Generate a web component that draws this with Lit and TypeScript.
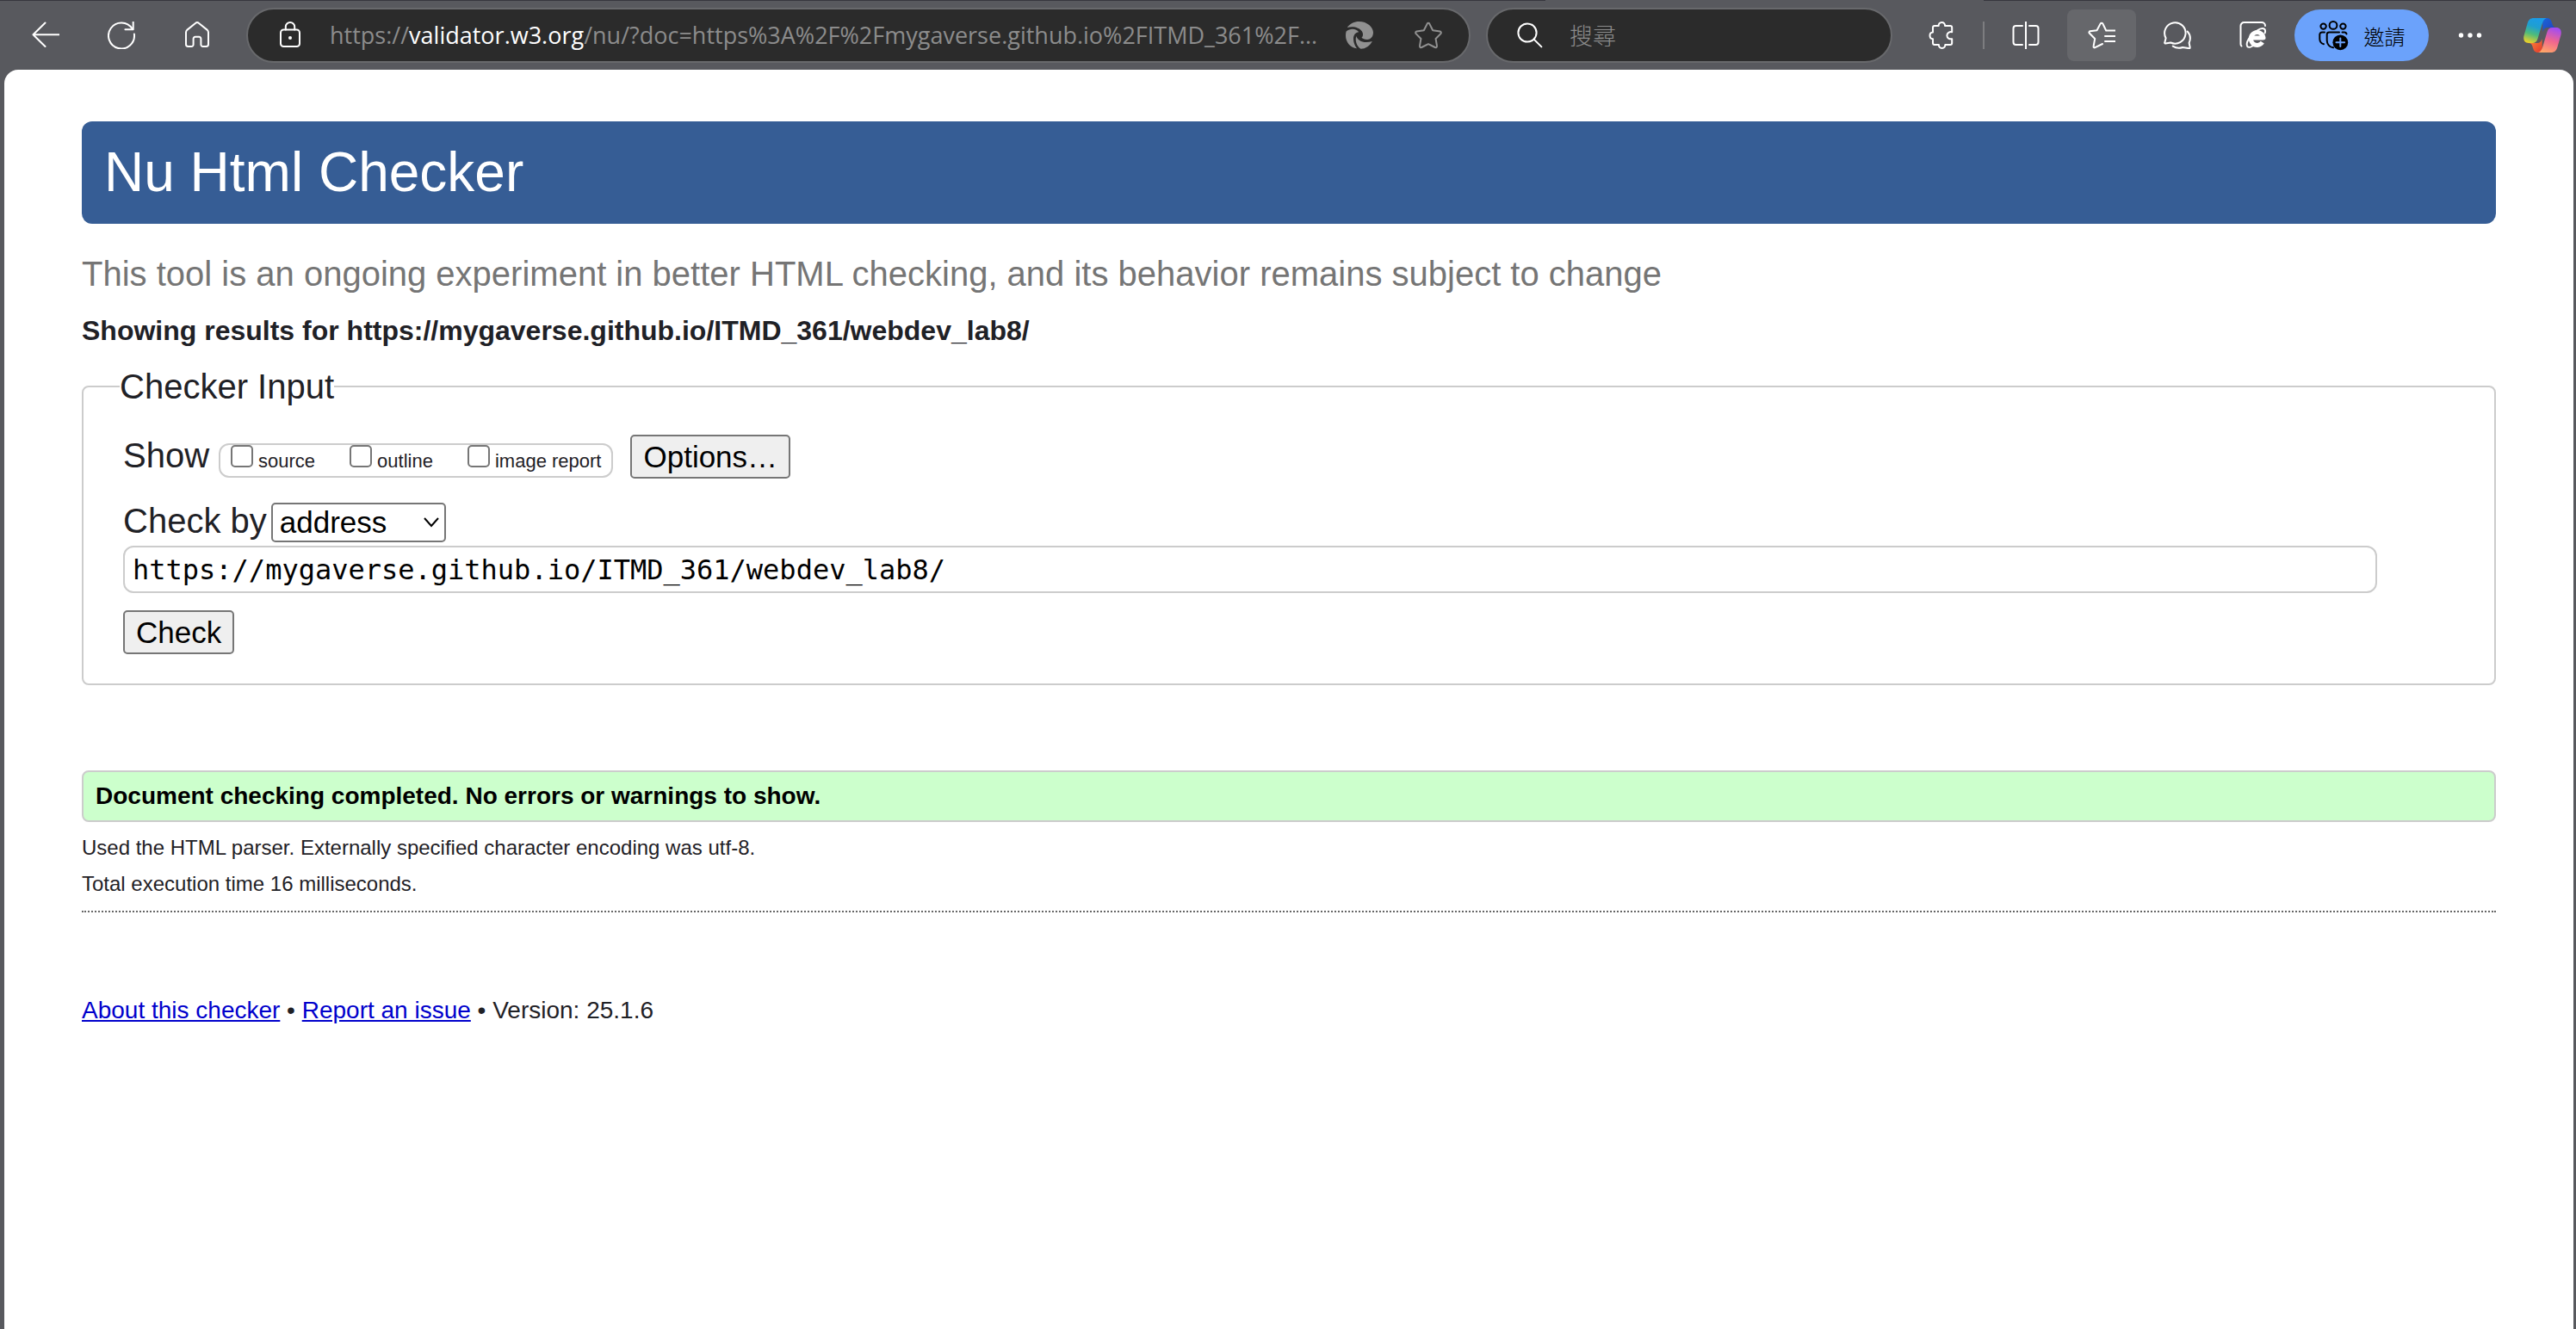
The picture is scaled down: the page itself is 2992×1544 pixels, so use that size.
import { LitElement, html, css, svg } from "lit";
import { customElement, state } from "lit/decorators.js";

const DOC_URL = "https://mygaverse.github.io/ITMD_361/webdev_lab8/";

const icons = {
  back: svg`<path d="M15.5 1.5 1.5 15.3 15.5 29M1.5 15.3H32" />`,
  reload: svg`<path d="M30.9 14.6A15 15 0 1 1 28.6 8.3" /><path d="M29.7 0.6V9.2H20.4" />`,
  home: svg`<path d="M3 12.6a4 4 0 0 1 1.2-2.7L14.3 1.8a2.4 2.4 0 0 1 3.4 0L27.8 9.9A4 4 0 0 1 29 12.6V26.6a2.4 2.4 0 0 1-2.4 2.4H22.6a2.2 2.2 0 0 1-2.2-2.2V20a2.2 2.2 0 0 0-2.2-2.2H13.8A2.2 2.2 0 0 0 11.6 20v6.8A2.2 2.2 0 0 1 9.4 29H5.4A2.4 2.4 0 0 1 3 26.6Z" />`,
  lock: svg`<rect x="5" y="9.5" width="22" height="19.6" rx="3.4" /><path d="M10.8 9.5V6.2a5.2 5.2 0 0 1 10.4 0V9.5" /><circle class="solid" cx="16" cy="19" r="2" />`,
  swirl: svg`<path class="solid" d="M1.8 7C5 2.2 10 0 15.5 0 25 0 32 6.500 32 12.800 32 18 28.500 21 25 21 22 21 19.500 20 18.500 18.800 20.600 17 20.400 13.500 18.800 11.200 16 7 8.500 4.800 1.800 7Z" /><path class="solid" d="M0.600 11.500C5.500 7.200 12.500 8.200 15.200 12.200 11.500 12.600 9 15.500 9 20 9 24.500 10.500 28 13 31.200 5.500 30.500 0 24 0 16.500 0 14.500 0.200 12.800 0.600 11.500Z" /><path class="solid" d="M12.300 17C14 22.500 21 26 30.800 23 28.500 28 23 31.800 17.500 31.800 12.500 28.500 10.700 22 12.300 17Z" />`,
  star: svg`<path d="M14.700 2.600a1.500 1.500 0 0 1 2.600 0L21.200 10.300 29.600 11.600a1.500 1.500 0 0 1 0.800 2.500L24.600 20 26 28.400a1.500 1.500 0 0 1-2.200 1.600L16 26.200 8.200 30A1.500 1.500 0 0 1 6 28.400L7.400 20 1.600 14.100a1.500 1.500 0 0 1 0.800-2.500L10.800 10.300Z" />`,
  search: svg`<circle cx="13" cy="13" r="10.600" /><path d="M20.600 20.600 29.400 29.400" />`,
  puzzle: svg`<path d="M8 5H12.700C12.400 2.800 14 1 16.300 1s4 1.800 3.700 4H26.200a2 2 0 0 1 2 2v5.200C25.500 11.500 22.400 13.200 22.400 16.200s3 4.600 5.800 4V25a2 2 0 0 1-2 2H20.300C20.400 29.400 19 31 16.600 31S12.800 29.400 12.900 27H8a2 2 0 0 1-2-2V20.300C3.900 20.200 2.500 18.600 2.500 16.300S3.900 12.600 6 12.500V7a2 2 0 0 1 2-2Z" />`,
  split: svg`<path d="M12 5H4.500A3 3 0 0 0 1.500 8V24a3 3 0 0 0 3 3H12M20 5h7.500a3 3 0 0 1 3 3V24a3 3 0 0 1-3 3H20M16 0V32" />`,
  favorites: svg`<path d="M17 26 8.500 30.200a1.300 1.300 0 0 1-1.900-1.400L8.200 20 1.800 13.500a1.300 1.300 0 0 1 0.700-2.200L10.500 10.300 14.700 2.400a1.500 1.500 0 0 1 2.600 0L21.200 10.500H32M20 17H32M20 23H32" />`,
  chat: svg`<path d="M2.300 25.400a0.800 0.800 0 0 1-1-1L2.600 19.200A12.200 12.200 0 1 1 8.200 24.500Z" /><path d="M10.800 28.600a12.500 12.500 0 0 0 11.300 1.400L29.800 31.200a0.800 0.800 0 0 0 0.900-1L29.600 24.800A12.300 12.300 0 0 0 27.600 11.500" />`,
  explorer: svg`<path d="M2.500 28.500A3 3 0 0 1 1.500 26V5A4 4 0 0 1 5.500 1H26a4 4 0 0 1 4 4" /><path class="blade" d="M26.800 24.200A7.400 7.400 0 1 1 28 18.900H15" /><path d="M29.600 13.500C31.800 7.500 26.500 6.500 20.500 10.500 12 15.800 7 25.200 9.200 28.800 10.500 30.600 14 29.600 16.500 27.800" />`,
  invite: svg`<g class="dark"><circle cx="5.600" cy="6.600" r="3.200" /><circle cx="17" cy="5.400" r="4.400" /><circle cx="28.400" cy="6.600" r="3.200" /><path d="M7 13.500H4A2.600 2.600 0 0 0 1.300 16V21.500A6.500 6.500 0 0 0 6 27.300M27.500 13.500H30A2.600 2.600 0 0 1 32.500 15.500M24 13.500H12.300A2.600 2.600 0 0 0 9.700 16V23A8.300 8.300 0 0 0 17 31.300" /></g><circle cx="25.300" cy="25.300" r="8.900" fill="#000" stroke="none" /><path d="M25.300 20.500V30.100M20.500 25.300H30.100" stroke="#6ba2fb" />`,
  more: svg`<g class="solid"><circle cx="5.500" cy="16" r="2.700" /><circle cx="16" cy="16" r="2.700" /><circle cx="26.500" cy="16" r="2.700" /></g>`,
};

const icon = (shape: unknown, size = 32) => html`
  <svg class="icon" width=${size} height=${size} viewBox="0 0 ${size} ${size}" aria-hidden="true">${shape}</svg>
`;

@customElement("browser-toolbar")
class BrowserToolbar extends LitElement {
  static styles = css`
    :host {
      display: flex;
      flex-direction: column;
      font-family: "Open Sans", "Noto Sans CJK TC", sans-serif;
    }
    .edge {
      display: flex;
      justify-content: space-between;
      height: 1px;
    }
    .edge-left, .edge-right { background: #37373e; }
    .edge-left { width: 60%; }
    .edge-right { width: 23%; }
    .bar {
      display: flex;
      align-items: center;
      height: 80px;
      padding: 0 17px 0 21px;
    }
    button {
      display: flex;
      align-items: center;
      justify-content: center;
      border: 0;
      padding: 0;
      background: none;
      color: #fff;
      font-family: inherit;
    }
    .icon {
      display: block;
      flex: none;
      fill: none;
      stroke: currentColor;
      stroke-width: 2;
      stroke-linecap: round;
      stroke-linejoin: round;
    }
    .solid { fill: currentColor; stroke: none; }
    .blade { stroke-width: 5; stroke-linecap: butt; }
    .dark { stroke: #000; }
    .nav { display: flex; gap: 24px; margin-right: 25px; }
    .nav button { width: 64px; height: 60px; }
    .field {
      box-sizing: border-box;
      display: flex;
      align-items: center;
      height: 64px;
      border: 2px solid #68696c;
      border-radius: 32px;
      background: #2b2b2b;
    }
    .address {
      flex: 1;
      min-width: 0;
      gap: 24px;
      margin-right: 18px;
      padding: 0 31px 0 33px;
    }
    .site { display: flex; flex: 1; align-items: center; gap: 30px; min-width: 0; }
    .tools { display: flex; gap: 48px; }
    .url {
      flex: 1;
      overflow: hidden;
      color: #8c8c8c;
      font-size: 27px;
      line-height: 38px;
      white-space: nowrap;
    }
    .host { color: #fff; }
    .muted { color: #919191; }
    .search {
      flex: 0 1 472px;
      gap: 30px;
      margin-right: 17px;
      padding: 0 33px;
      color: #fff;
    }
    .search input {
      flex: 1;
      min-width: 0;
      border: 0;
      padding: 0;
      outline: 0;
      background: none;
      color: #fff;
      font-family: "Noto Sans CJK TC", sans-serif;
      font-size: 27px;
      font-weight: 300;
      line-height: 38px;
    }
    .search input::placeholder { color: #8c8c8c; opacity: 1; }
    .actions { display: flex; align-items: center; gap: 8px; }
    .actions button { width: 80px; height: 60px; border-radius: 8px; }
    .actions .active { background: #66676b; }
    .divider { width: 2px; height: 32px; background: #7d7d80; }
    .actions .invite {
      gap: 18px;
      width: 156px;
      border-radius: 30px;
      background: #6ba2fb;
      color: #000;
      font-size: 24px;
      font-weight: 300;
      font-family: "Noto Sans CJK TC", sans-serif;
    }
    .actions .copilot { width: 44px; margin-left: 14px; }
  `;

  render() {
    return html`
      <div class="edge"><div class="edge-left"></div><div class="edge-right"></div></div>
      <div class="bar">
        <nav class="nav" aria-label="Navigation">
          <button aria-label="Back">${icon(icons.back)}</button>
          <button aria-label="Refresh">${icon(icons.reload)}</button>
          <button aria-label="Home">${icon(icons.home)}</button>
        </nav>
        <div class="field address">
          <div class="site">
            <button aria-label="Site information">${icon(icons.lock)}</button>
            <div class="url" role="textbox" tabindex="0" aria-label="Address">https://<span class="host">validator.w3.org</span>/nu/?doc=https%3A%2F%2Fmygaverse.github.io%2FITMD_361%2F...</div>
          </div>
          <div class="tools">
            <button class="muted" aria-label="Page tools">${icon(icons.swirl)}</button>
            <button class="muted" aria-label="Add to favorites">${icon(icons.star)}</button>
          </div>
        </div>
        <label class="field search">
          ${icon(icons.search)}
          <input type="search" placeholder="搜尋" aria-label="搜尋" />
        </label>
        <div class="actions">
          <button aria-label="Extensions">${icon(icons.puzzle)}</button>
          <div class="divider"></div>
          <button aria-label="Split screen">${icon(icons.split)}</button>
          <button class="active" aria-label="Favorites">${icon(icons.favorites)}</button>
          <button aria-label="Chat">${icon(icons.chat)}</button>
          <button aria-label="Internet Explorer mode">${icon(icons.explorer)}</button>
          <button class="invite">${icon(icons.invite, 35)}<span>邀請</span></button>
          <button aria-label="More">${icon(icons.more)}</button>
          <button class="copilot" aria-label="Copilot">
            <svg width="44" height="40" viewBox="0 0 44 40" aria-hidden="true">
              <defs>
                <linearGradient id="cool" x1="0.6" y1="0" x2="0.3" y2="1">
                  <stop offset="0" stop-color="#1b9be8" />
                  <stop offset="0.35" stop-color="#1f9fd0" />
                  <stop offset="0.65" stop-color="#4dbb7c" />
                  <stop offset="1" stop-color="#e8d02c" />
                </linearGradient>
                <linearGradient id="warm" x1="0.6" y1="0" x2="0.3" y2="1">
                  <stop offset="0" stop-color="#a44df0" />
                  <stop offset="0.5" stop-color="#f0668f" />
                  <stop offset="1" stop-color="#ffa668" />
                </linearGradient>
                <linearGradient id="fold" x1="0" y1="0" x2="1" y2="1">
                  <stop offset="0" stop-color="#1a64d8" />
                  <stop offset="1" stop-color="#2340b8" />
                </linearGradient>
                <linearGradient id="ember" x1="0" y1="0" x2="1" y2="1">
                  <stop offset="0" stop-color="#ff8a3c" />
                  <stop offset="1" stop-color="#e0382c" />
                </linearGradient>
              </defs>
              <path fill="url(#fold)" d="M22 0H27C31 0 32 2 33.500 7 34.300 9.800 35.500 11 38 11H28C25 11 23.500 12.500 22.500 16Z" />
              <path fill="url(#ember)" d="M22 40H17C13 40 12 38 10.500 33 9.700 30.200 8.500 29 6 29H16C19 29 20.500 27.500 21.500 24Z" />
              <path fill="url(#cool)" d="M12 0H27C23.500 1 22.500 4 21 9L16.500 24C15.500 27.500 13.500 29 10.500 29H6C1 29-0.500 25 0.500 20.500L4.500 6.500C5.800 2 8 0 12 0Z" />
              <path fill="url(#warm)" d="M32 40H17C20.500 39 21.500 36 23 31L27.500 16C28.500 12.500 30.500 11 33.500 11H38C43 11 44.500 15 43.500 19.500L39.500 33.500C38.200 38 36 40 32 40Z" />
            </svg>
          </button>
        </div>
      </div>
    `;
  }
}

@customElement("checker-form")
class CheckerForm extends LitElement {
  static styles = css`
    :host {
      display: block;
      color: #1f2126;
      font-size: 40px;
      line-height: 46px;
    }
    .frame {
      min-width: 0;
      margin: 0;
      border: 2px solid #ccc;
      border-radius: 8px;
      padding: 0 42px 34px;
    }
    legend { padding: 0; }
    .rows { display: flex; flex-direction: column; align-items: flex-start; padding: 33px 4px 0; }
    .row { display: flex; align-items: baseline; }
    .shown {
      display: flex;
      align-items: baseline;
      gap: 40px;
      margin: 0 20px 0 11px;
      border: 2px solid #ccc;
      border-radius: 12px;
      padding: 0 12px;
      font-size: 22px;
      line-height: 35px;
    }
    .option { display: flex; align-items: baseline; gap: 6px; }
    .box {
      appearance: none;
      box-sizing: border-box;
      width: 26px;
      height: 26px;
      margin: 0;
      border: 2px solid #767676;
      border-radius: 5px;
      background: #fff;
    }
    .box:checked { background: #0075ff; }
    .push {
      border: 2px solid #767676;
      border-radius: 5px;
      padding: 0 13px;
      background: #efefef;
      color: #000;
      font-family: inherit;
      font-size: 35px;
      line-height: 47px;
    }
    .by { margin-top: 26px; gap: 5px; }
    .picker { display: grid; align-items: center; }
    .picker select {
      grid-area: 1 / 1;
      appearance: none;
      border: 2px solid #767676;
      border-radius: 5px;
      width: 203px;
      height: 46px;
      padding: 0 8px;
      background: #fff;
      color: #000;
      font-family: inherit;
      font-size: 35px;
      line-height: 42px;
    }
    .chevron {
      grid-area: 1 / 1;
      justify-self: end;
      margin-right: 7px;
      fill: none;
      stroke: #000;
      stroke-width: 2;
      pointer-events: none;
    }
    .doc {
      box-sizing: border-box;
      align-self: stretch;
      height: 55px;
      margin: 4px 90px 20px 0;
      border: 2px solid #ccc;
      border-radius: 12px;
      padding: 0 9px;
      color: #000;
      font-family: "DejaVu Sans Mono", monospace;
      font-size: 32px;
    }
  `;

  @state() private address = DOC_URL;

  render() {
    return html`
      <form @submit=${(e: Event) => e.preventDefault()}>
        <fieldset class="frame">
          <legend>Checker Input</legend>
          <div class="rows">
            <div class="row">
              <span>Show</span>
              <div class="shown">
                ${["source", "outline", "image report"].map(
                  (name) => html`<label class="option"><input class="box" type="checkbox" /><span>${name}</span></label>`
                )}
              </div>
              <button class="push" type="button">Options…</button>
            </div>
            <div class="row by">
              <label for="method">Check by</label>
              <div class="picker">
                <select id="method">
                  <option>address</option>
                  <option>file upload</option>
                  <option>text input</option>
                </select>
                <svg class="chevron" width="20" height="14" viewBox="0 0 20 14" aria-hidden="true"><path d="M2 2 10 11 18 2" /></svg>
              </div>
            </div>
            <input
              class="doc"
              type="url"
              aria-label="Document address"
              .value=${this.address}
              @input=${(e: Event) => (this.address = (e.target as HTMLInputElement).value)}
            />
            <button class="push" type="submit">Check</button>
          </div>
        </fieldset>
      </form>
    `;
  }
}

@customElement("app-root")
class AppRoot extends LitElement {
  static styles = css`
    :host {
      display: flex;
      flex-direction: column;
      min-height: 100vh;
      background: #58595e;
      font-family: "Liberation Sans", Arial, sans-serif;
    }
    .page {
      flex: 1;
      margin: 0 3px 0 5px;
      border-radius: 16px 16px 0 0;
      padding: 60px 90px;
      background: #fff;
      color: #1f2126;
    }
    h1, h2, p { margin: 0; }
    .title {
      border-radius: 12px;
      padding: 0 26px;
      background: #365d95;
      color: #fff;
      font-size: 64px;
      font-weight: 400;
      line-height: 119px;
    }
    .tagline { margin-top: 35px; color: #757575; font-size: 40px; line-height: 46px; }
    .subject { margin: 25px 0 24px; font-size: 32px; line-height: 36px; }
    .success {
      margin-top: 99px;
      border: 2px solid #ccc;
      border-radius: 8px;
      padding: 12px 14px;
      background: #cfc;
      color: #000;
      font-size: 28px;
      font-weight: 700;
      line-height: 32px;
    }
    .details {
      display: flex;
      flex-direction: column;
      gap: 14px;
      border-bottom: 2px dotted #666;
      padding: 16px 0 17px;
      font-size: 24px;
      line-height: 28px;
    }
    .footer { margin-top: 98px; font-size: 28px; line-height: 32px; }
    .footer a { color: #00c; }
  `;

  render() {
    return html`
      <browser-toolbar></browser-toolbar>
      <main class="page">
        <h1 class="title">Nu Html Checker</h1>
        <p class="tagline">This tool is an ongoing experiment in better HTML checking, and its behavior remains subject to change</p>
        <h2 class="subject">Showing results for ${DOC_URL}</h2>
        <checker-form></checker-form>
        <p class="success">Document checking completed. No errors or warnings to show.</p>
        <div class="details">
          <p>Used the HTML parser. Externally specified character encoding was utf-8.</p>
          <p>Total execution time 16 milliseconds.</p>
        </div>
        <footer class="footer">
          <a href="#about">About this checker</a> • <a href="#issues">Report an issue</a> • Version: 25.1.6
        </footer>
      </main>
    `;
  }
}
